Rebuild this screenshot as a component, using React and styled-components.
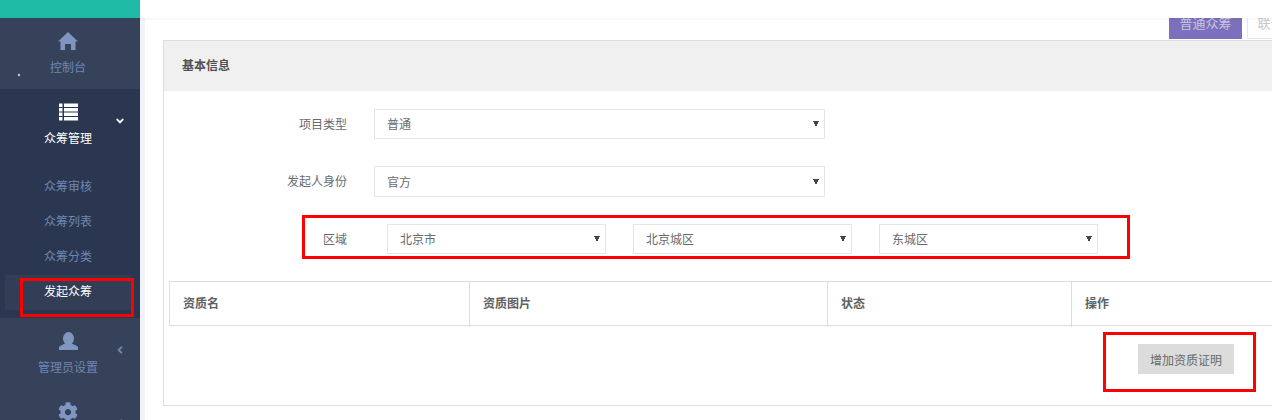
import React from 'react';
import styled, { createGlobalStyle } from 'styled-components';
import { FaCog, FaAngleDown, FaAngleLeft } from 'react-icons/fa';

const GlobalStyle = createGlobalStyle`
  html, body {
    margin: 0;
    padding: 0;
    height: 420px;
    overflow: hidden;
    background: #fff;
  }
  * {
    box-sizing: border-box;
  }
`;

const font = `"Liberation Sans", "Noto Sans CJK SC", sans-serif`;

const subItems = ['众筹审核', '众筹列表', '众筹分类', '发起众筹'];

const HomeIcon = () => (
  <svg width="20" height="18" viewBox="0 0 20 18" fill="currentColor">
    <path d="M10 0L20 9.5H17.5V18H13V12H7V18H2.5V9.5H0Z" />
  </svg>
);

const ListIcon = () => (
  <svg width="19" height="18" viewBox="0 0 19 18" fill="currentColor">
    {[0.5, 5, 9.5, 14].map((y) => (
      <g key={y}>
        <rect x="0" y={y} width="3.5" height="3.5" />
        <rect x="5" y={y} width="14" height="3.5" />
      </g>
    ))}
  </svg>
);

const UserIcon = () => (
  <svg width="19" height="18" viewBox="0 0 19 18" fill="currentColor">
    <ellipse cx="9.5" cy="6.5" rx="5.5" ry="6.5" />
    <path d="M0 18V15.5C0 13.5 4.5 13 6.5 11H12.5C14.5 13 19 13.5 19 15.5V18Z" />
  </svg>
);

export default function App() {
  return (
    <Page>
      <GlobalStyle />
      <Sidebar>
        <Brand />
        <NavItem>
          <NavIcon><HomeIcon /></NavIcon>
          <NavText>控制台</NavText>
          <Speck />
        </NavItem>
        <OpenGroup>
          <NavHead>
            <NavIcon $active><ListIcon /></NavIcon>
            <NavText $active>众筹管理</NavText>
            <Arrow $active><FaAngleDown /></Arrow>
          </NavHead>
          <SubList>
            {subItems.map((label, i) => (
              <SubItem key={label} $active={i === 3}>
                {label}
                {i === 3 && <SideMark />}
              </SubItem>
            ))}
          </SubList>
        </OpenGroup>
        <NavItem>
          <NavIcon><UserIcon /></NavIcon>
          <NavText>管理员设置</NavText>
          <Arrow><FaAngleLeft /></Arrow>
        </NavItem>
        <NavItem>
          <NavIcon><FaCog /></NavIcon>
          <Arrow $top={28}><FaAngleLeft /></Arrow>
        </NavItem>
      </Sidebar>
      <Main>
        <TopBar />
        <Content>
          <Tabs>
            <Tab $active>普通众筹</Tab>
            <Tab>联合众筹</Tab>
          </Tabs>
          <Card>
            <CardHead>基本信息</CardHead>
            <CardBody>
              <FormRow>
                <Label>项目类型</Label>
                <Select defaultValue="普通">
                  <option>普通</option>
                  <option>联合</option>
                </Select>
              </FormRow>
              <FormRow $tall>
                <Label>发起人身份</Label>
                <Select defaultValue="官方">
                  <option>官方</option>
                  <option>个人</option>
                </Select>
              </FormRow>
              <RegionRow>
                <Label>区域</Label>
                <RegionSelects>
                  <Select $small><option>北京市</option></Select>
                  <Select $small><option>北京城区</option></Select>
                  <Select $small><option>东城区</option></Select>
                </RegionSelects>
                <RegionMark />
              </RegionRow>
              <Table>
                <HeadCell>资质名</HeadCell>
                <HeadCell>资质图片</HeadCell>
                <HeadCell>状态</HeadCell>
                <HeadCell>操作</HeadCell>
              </Table>
              <Actions>
                <AddButton>
                  增加资质证明
                  <ButtonMark />
                </AddButton>
              </Actions>
            </CardBody>
          </Card>
        </Content>
      </Main>
    </Page>
  );
}

const Page = styled.div`
  display: flex;
  width: 1272px;
  height: 420px;
  overflow: hidden;
  font-family: ${font};
  font-size: 12px;
  color: #676a6c;
`;

const Sidebar = styled.aside`
  flex: 0 0 140px;
  height: 420px;
  overflow: hidden;
  background: #364259;
`;

const Brand = styled.div`
  height: 18px;
  background: #1fbba6;
`;

const NavItem = styled.div`
  position: relative;
  display: flex;
  flex-direction: column;
  align-items: center;
  height: 71px;
  padding: 13px 4px 0 0;
`;

const NavHead = styled.div`
  position: relative;
  display: flex;
  flex-direction: column;
  align-items: center;
  height: 81px;
  padding: 13px 4px 0 0;
`;

const OpenGroup = styled.div`
  height: 229px;
  background: #2b3750;
`;

const NavIcon = styled.div`
  display: flex;
  justify-content: center;
  align-items: center;
  height: 20px;
  font-size: 20px;
  color: ${(p) => (p.$active ? '#fff' : '#7f96c1')};
`;

const NavText = styled.div`
  margin-top: 8px;
  height: 18px;
  line-height: 18px;
  color: ${(p) => (p.$active ? '#fff' : '#6f86b1')};
`;

const Arrow = styled.div`
  position: absolute;
  top: ${(p) => p.$top || 26}px;
  left: 114px;
  display: flex;
  font-size: 12px;
  color: ${(p) => (p.$active ? '#fff' : '#6f86b1')};
`;

const Speck = styled.i`
  position: absolute;
  left: 18px;
  top: 56px;
  width: 2px;
  height: 2px;
  background: #cfd5e0;
  transform: rotate(45deg);
`;

const SubList = styled.div`
  display: flex;
  flex-direction: column;
  padding-left: 5px;
`;

const SubItem = styled.div`
  position: relative;
  width: 126px;
  height: 35px;
  padding-left: 39px;
  line-height: 35px;
  color: ${(p) => (p.$active ? '#fff' : '#6f86b1')};
  background: ${(p) => (p.$active ? '#323e56' : 'transparent')};
`;

const SideMark = styled.span`
  position: absolute;
  left: 15px;
  top: 3px;
  width: 114px;
  height: 39px;
  border: 3px solid #f00;
`;

const Main = styled.main`
  flex: 1;
  min-width: 0;
  display: flex;
  flex-direction: column;
  height: 420px;
`;

const TopBar = styled.div`
  flex: 0 0 18px;
  background: #fff;
  box-shadow: 0 1px 3px rgba(0, 0, 0, 0.06);
  position: relative;
  z-index: 1;
`;

const Content = styled.div`
  flex: 1;
  padding-left: 18px;
  background: #fff;
  border-left: 5px solid #f0f3fa;
`;

const Tabs = styled.div`
  display: flex;
  gap: 5px;
  height: 22px;
  padding-left: 1006px;
  width: 1300px;
`;

const Tab = styled.div`
  flex: 0 0 73px;
  height: 21px;
  font-size: 13px;
  line-height: 12px;
  text-align: center;
  white-space: nowrap;
  overflow: hidden;
  color: ${(p) => (p.$active ? '#c9c6dc' : '#c8c8c8')};
  background: ${(p) => (p.$active ? '#7c6fbc' : '#fff')};
  border: ${(p) => (p.$active ? 'none' : '1px solid #e5e6e7')};
  border-top: none;
`;

const Card = styled.section`
  width: 1130px;
  height: 366px;
  border: 1px solid #ddd;
`;

const CardHead = styled.div`
  height: 50px;
  padding-left: 18px;
  line-height: 50px;
  font-weight: 700;
  color: #4d4f51;
  background: #f0f0f0;
`;

const CardBody = styled.div`
  padding-top: 18px;
`;

const FormRow = styled.div`
  display: flex;
  align-items: center;
  gap: 27px;
  height: ${(p) => (p.$tall ? '31px' : '30px')};
  margin-bottom: 27px;
`;

const RegionRow = styled.div`
  position: relative;
  display: flex;
  align-items: center;
  gap: 40px;
  height: 30px;
  margin-bottom: 27px;
`;

const RegionSelects = styled.div`
  display: flex;
  gap: 27px;
`;

const RegionMark = styled.span`
  position: absolute;
  left: 138px;
  top: -9px;
  width: 828px;
  height: 44px;
  border: 3px solid #f00;
`;

const Label = styled.label`
  flex: 0 0 183px;
  padding-bottom: 2px;
  text-align: right;
`;

const Select = styled.select`
  appearance: none;
  width: ${(p) => (p.$small ? '219px' : '451px')};
  height: 100%;
  min-height: 30px;
  padding: 2px 0 0 12px;
  font-family: ${font};
  font-size: 12px;
  color: #676a6c;
  background-color: #fff;
  background-image: linear-gradient(to top right, transparent 50%, #444 50%),
    linear-gradient(to top left, transparent 50%, #444 50%);
  background-size: 3px 6px;
  background-position: right 8px center, right 5px center;
  background-repeat: no-repeat;
  border: 1px solid #e5e6e7;
  border-radius: 0;
  outline: none;
`;

const Table = styled.div`
  display: grid;
  grid-template-columns: 300px 358px 244px 1fr;
  margin-left: 5px;
  height: 45px;
  border-top: 1px solid #ddd;
  border-bottom: 1px solid #ddd;
  border-left: 1px solid #ddd;
`;

const HeadCell = styled.div`
  padding-left: 13px;
  line-height: 45px;
  font-weight: 700;
  color: #5e6163;
  border-right: 1px solid #ddd;
  &:last-child {
    border-right: none;
  }
`;

const Actions = styled.div`
  display: flex;
  justify-content: flex-end;
  padding: 18px 58px 0 0;
`;

const AddButton = styled.button`
  position: relative;
  width: 96px;
  height: 30px;
  padding: 0;
  font-family: ${font};
  font-size: 12px;
  color: #676a6c;
  background: #dcdcdc;
  border: none;
  border-radius: 0;
`;

const ButtonMark = styled.span`
  position: absolute;
  left: -35px;
  top: -12px;
  width: 153px;
  height: 60px;
  border: 3px solid #f00;
`;
